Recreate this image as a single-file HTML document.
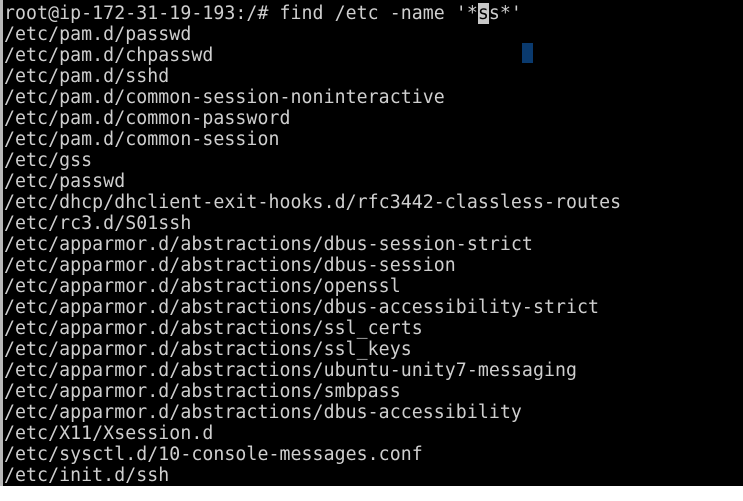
<!DOCTYPE html>
<html><head><style>
html,body{margin:0;padding:0;background:#fff;width:743px;height:501px;overflow:hidden}
#t{position:absolute;left:0;top:0;width:743px;height:486px;background:#000;border-left:3px solid #b8b8b8;box-sizing:border-box}
pre{position:absolute;left:4px;top:3px;margin:0;font-family:"DejaVu Sans Mono","Liberation Mono",monospace;font-size:18.2px;letter-spacing:0.07px;line-height:21px;color:#cfcfcf}
.h{background:#c8c8c8;color:#000}
#c{position:absolute;left:522px;top:43px;width:11px;height:20px;background:#0a3a6e}
</style></head><body>
<div id="t"></div>
<pre>root@ip-172-31-19-193:/# find /etc -name '*<span class="h">s</span>s*'
/etc/pam.d/passwd
/etc/pam.d/chpasswd
/etc/pam.d/sshd
/etc/pam.d/common-session-noninteractive
/etc/pam.d/common-password
/etc/pam.d/common-session
/etc/gss
/etc/passwd
/etc/dhcp/dhclient-exit-hooks.d/rfc3442-classless-routes
/etc/rc3.d/S01ssh
/etc/apparmor.d/abstractions/dbus-session-strict
/etc/apparmor.d/abstractions/dbus-session
/etc/apparmor.d/abstractions/openssl
/etc/apparmor.d/abstractions/dbus-accessibility-strict
/etc/apparmor.d/abstractions/ssl_certs
/etc/apparmor.d/abstractions/ssl_keys
/etc/apparmor.d/abstractions/ubuntu-unity7-messaging
/etc/apparmor.d/abstractions/smbpass
/etc/apparmor.d/abstractions/dbus-accessibility
/etc/X11/Xsession.d
/etc/sysctl.d/10-console-messages.conf
/etc/init.d/ssh</pre>
<div id="c"></div>
</body></html>
